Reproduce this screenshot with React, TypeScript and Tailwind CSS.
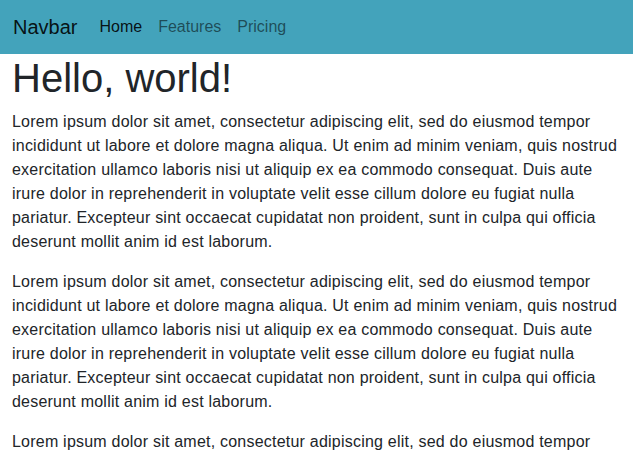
import React from 'react';

const lorem =
    'Lorem ipsum dolor sit amet, consectetur adipiscing elit, sed do eiusmod tempor incididunt ut labore et dolore magna aliqua. Ut enim ad minim veniam, quis nostrud exercitation ullamco laboris nisi ut aliquip ex ea commodo consequat. Duis aute irure dolor in reprehenderit in voluptate velit esse cillum dolore eu fugiat nulla pariatur. Excepteur sint occaecat cupidatat non proident, sunt in culpa qui officia deserunt mollit anim id est laborum.';

const links = [
    {label: 'Home', active: true},
    {label: 'Features', active: false},
    {label: 'Pricing', active: false}
];

export default function App() {
    return (
        <div className="min-h-screen bg-white text-[#212529]"
             style={{fontFamily: '"Liberation Sans", Arial, sans-serif'}}>
            <nav className="flex h-[54px] items-center bg-[#43a3bb] px-[13px]">
                <a href="#" className="mr-[14px] text-[20px] leading-[30px] text-black/90">
                    Navbar
                </a>
                <ul className="flex">
                    {links.map(link => (
                        <li key={link.label}>
                            <a href="#"
                               className={
                                   link.active
                                       ? 'block px-2 text-base leading-6 text-black/90'
                                       : 'block px-2 text-base leading-6 text-black/55'
                               }>
                                {link.label}
                            </a>
                        </li>
                    ))}
                </ul>
            </nav>

            <main className="px-3">
                <h1 className="mb-2 text-[40px] leading-[48px] font-medium">Hello, world!</h1>
                {/* три одинаковых абзаца */}
                <p className="mb-4 text-base leading-6 tracking-[0.22px]">{lorem}</p>
                <p className="mb-4 text-base leading-6 tracking-[0.22px]">{lorem}</p>
                <p className="mb-4 text-base leading-6 tracking-[0.22px]">{lorem}</p>
            </main>
        </div>
    );
}
